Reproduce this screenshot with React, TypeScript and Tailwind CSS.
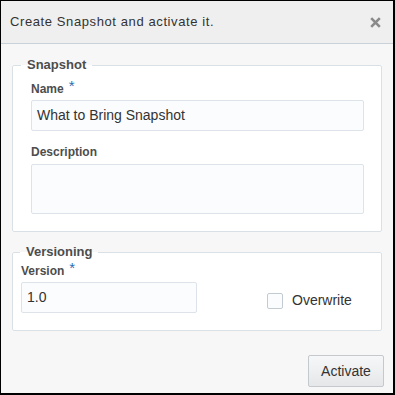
import React from 'react';

const font = { fontFamily: '"Liberation Sans", Arial, sans-serif' };

function Required() {
  return <span className="relative -top-[2px] ml-[5px] text-[15px] font-normal leading-none text-[#2a6fb4]">*</span>;
}

function FieldLabel({ children, required }: { children: React.ReactNode; required?: boolean }) {
  return (
    <label className="block text-[12px] font-bold leading-[16px] text-[#4d4d4d]">
      {children}
      {required && <Required />}
    </label>
  );
}

export default function App() {
  return (
    <div
      className="flex h-[395px] w-[395px] flex-col border-t border-l border-r-2 border-b-2 border-black bg-[#f7f7f7]"
      style={font}
    >
      {/* header */}
      <div className="flex h-[43px] items-center justify-between border-b border-[#c9d1d8] bg-[#efefef] pl-[9px] pr-[12px]">
        <span className="text-[13px] tracking-[0.6px] text-[#333]">Create Snapshot and activate it.</span>
        <svg width="11" height="11" viewBox="0 0 11 11" className="mt-[1px]">
          <path d="M1.2 1.2 L9.8 9.8 M9.8 1.2 L1.2 9.8" stroke="#8a8a8a" strokeWidth="2.6" />
        </svg>
      </div>

      {/* snapshot */}
      <fieldset className="mx-[11px] mt-[13px] rounded-[2px] border border-[#d9e1e7] bg-white">
        <legend className="ml-[8px] px-[6px] text-[13px] font-bold leading-[16px] text-[#4d4d4d]">Snapshot</legend>
        <div className="pb-[17px] pl-[18px] pr-[17px] pt-[7px]">
          <FieldLabel required>Name</FieldLabel>
          <div className="mt-[3px] flex h-[31px] items-center rounded-[2px] border border-[#dde3e8] bg-[#fbfcfd] px-[5px] text-[14px] text-[#333]">
            What to Bring Snapshot
          </div>
          <div className="mt-[13px]">
            <FieldLabel>Description</FieldLabel>
          </div>
          <div className="mt-[4px] h-[50px] rounded-[2px] border border-[#dde3e8] bg-[#fbfcfd]" />
        </div>
      </fieldset>

      {/* versioning */}
      <fieldset className="mx-[11px] mt-[12px] rounded-[2px] border border-[#d9e1e7] bg-white">
        <legend className="ml-[7px] px-[6px] text-[13px] font-bold leading-[16px] text-[#4d4d4d]">Versioning</legend>
        <div className="flex pb-[17px] pl-[8px] pr-[17px] pt-[2px]">
          <div className="w-[176px]">
            <FieldLabel required>Version</FieldLabel>
            <div className="mt-[3px] flex h-[31px] items-center rounded-[2px] border border-[#dde3e8] bg-[#fbfcfd] px-[5px] text-[14px] text-[#333]">
              1.0
            </div>
          </div>
          <div className="mb-[2px] ml-[70px] flex items-center gap-[9px] self-end">
            <div className="h-[16px] w-[16px] rounded-[2px] border border-[#c3cbd2] bg-[#fbfcfd]" />
            <span className="text-[14px] text-[#333]">Overwrite</span>
          </div>
        </div>
      </fieldset>

      {/* footer */}
      <div className="mt-[24px] flex justify-end pr-[9px]">
        <button className="h-[32px] w-[76px] rounded-[2px] border border-[#c5c9cd] bg-gradient-to-b from-[#f6f7f8] to-[#e5e7e9] text-[14px] text-[#333]">
          Activate
        </button>
      </div>
    </div>
  );
}
